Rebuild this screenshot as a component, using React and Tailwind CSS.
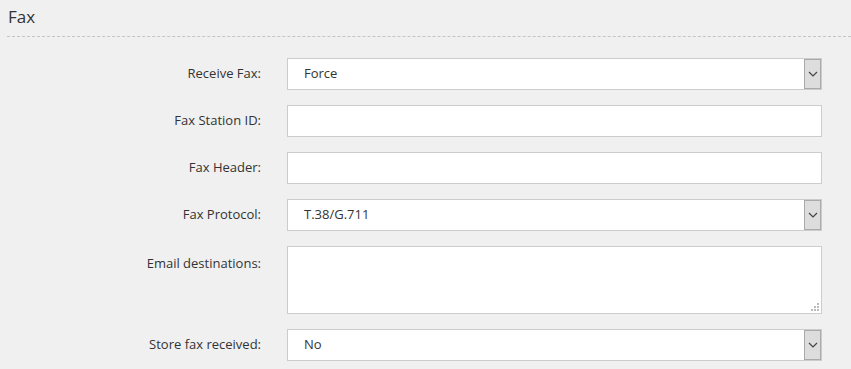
import React from "react";

const font = { fontFamily: '"Open Sans", "Liberation Sans", sans-serif' };

function Chevron() {
  return (
    <svg width="10" height="6" viewBox="0 0 10 6" className="text-[#444]">
      <path d="M1 1 L5 5 L9 1" fill="none" stroke="currentColor" strokeWidth="1.2" />
    </svg>
  );
}

function SelectBox({ value }) {
  return (
    <div className="flex h-[32px] w-[535px] items-stretch border border-[#cccccc] bg-white">
      <span className="flex flex-1 items-center pl-[16px] text-[13px] text-[#333]">{value}</span>
      <span className="flex w-[17px] items-center justify-center border border-[#aaaaaa] bg-[#dddddd]">
        <Chevron />
      </span>
    </div>
  );
}

function TextBox() {
  return <div className="h-[32px] w-[535px] border border-[#cccccc] bg-white" />;
}

function TextArea() {
  return (
    <div className="relative h-[68px] w-[535px] border border-[#cccccc] bg-white">
      <svg width="8" height="8" viewBox="0 0 8 8" className="absolute bottom-[2px] right-[2px]">
        <g fill="#bbbbbb">
          <rect x="6" y="0" width="2" height="2" />
          <rect x="3" y="3" width="2" height="2" />
          <rect x="6" y="3" width="2" height="2" />
          <rect x="0" y="6" width="2" height="2" />
          <rect x="3" y="6" width="2" height="2" />
          <rect x="6" y="6" width="2" height="2" />
        </g>
      </svg>
    </div>
  );
}

const rows = [
  { label: "Receive Fax:", field: <SelectBox value="Force" /> },
  { label: "Fax Station ID:", field: <TextBox /> },
  { label: "Fax Header:", field: <TextBox /> },
  { label: "Fax Protocol:", field: <SelectBox value="T.38/G.711" /> },
  { label: "Email destinations:", field: <TextArea />, top: true },
  { label: "Store fax received:", field: <SelectBox value="No" /> },
];

export default function App() {
  return (
    <div className="h-[369px] w-[851px] overflow-hidden bg-[#f0f0f0]" style={font}>
      <div className="pl-[7px] pt-[5px]">
        <h2 className="pl-[1px] text-[17px] leading-[24px] text-[#333]">Fax</h2>
        <div className="mt-[7px] border-b border-dashed border-[#c4c4c4]" />
      </div>
      <div className="mt-[21px] flex flex-col gap-[15px]">
        {rows.map((row) => (
          <div key={row.label} className={`flex ${row.top ? "items-start" : "items-center"}`}>
            <label
              className={`w-[261px] text-right text-[13px] text-[#333] ${row.top ? "pt-[8px]" : ""}`}
            >
              {row.label}
            </label>
            <div className="ml-[26px]">{row.field}</div>
          </div>
        ))}
      </div>
    </div>
  );
}
